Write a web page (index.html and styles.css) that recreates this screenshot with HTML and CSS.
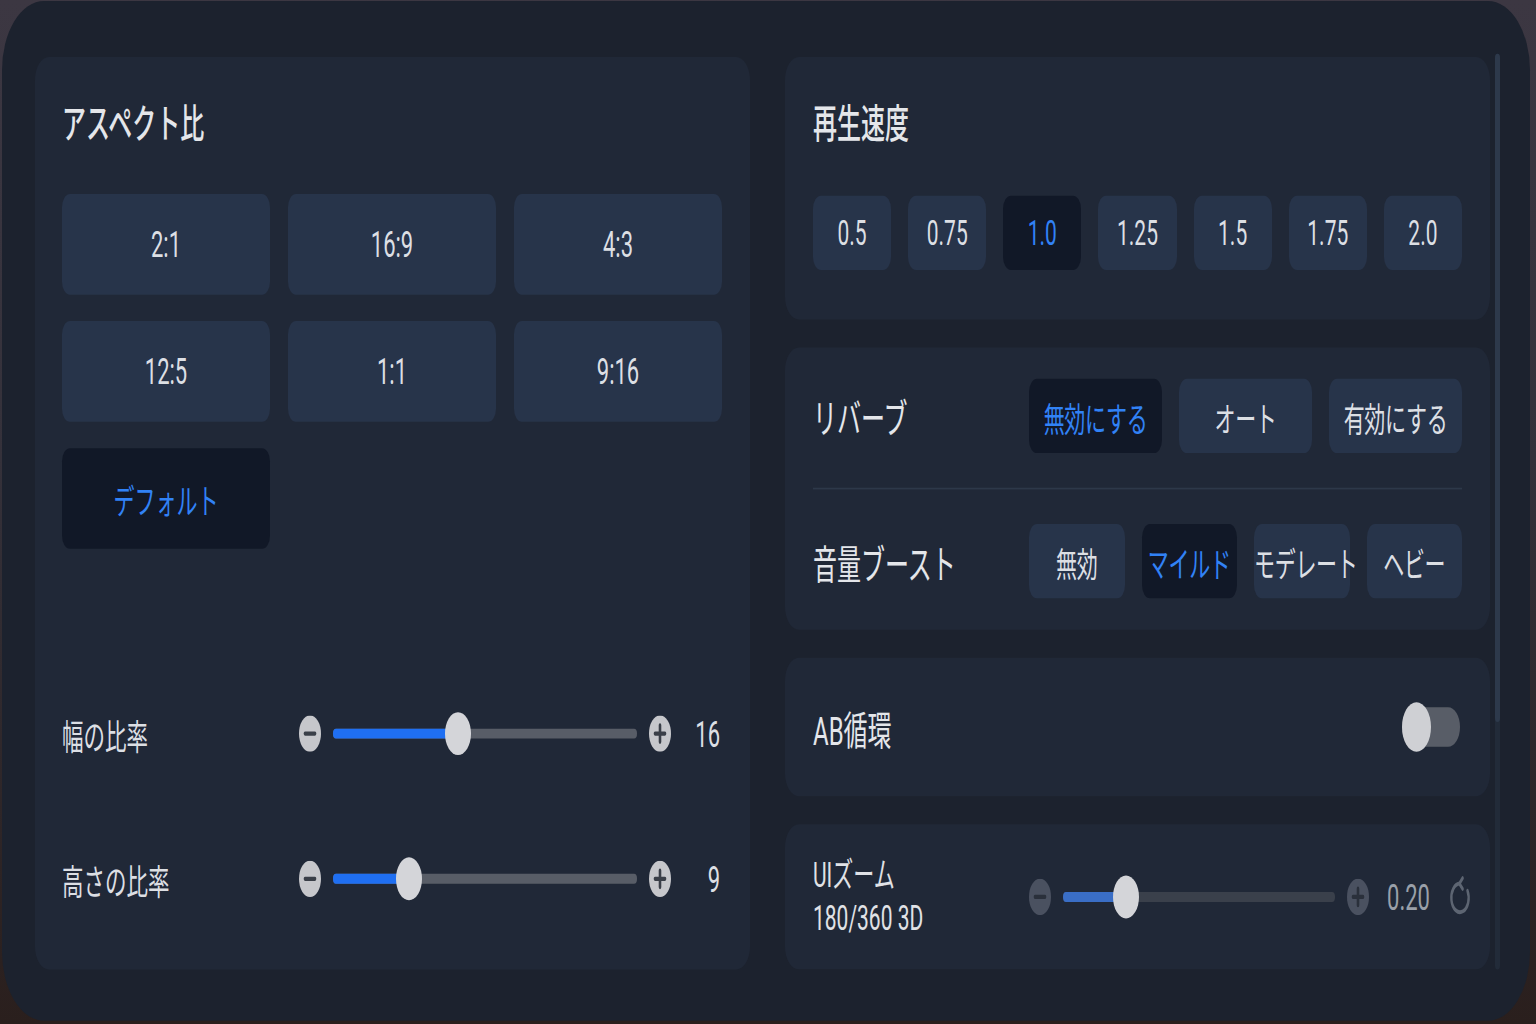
FILE: index.html
```html
<!DOCTYPE html>
<html lang="ja">
<head>
    <meta charset="UTF-8">
    <title>プレーヤー設定</title>
    <link rel="stylesheet" href="styles.css">
</head>
<body>
    <div class="stage">
        <div class="window">
            <!-- 左: アスペクト比 -->
            <section class="card aspect-card">
                <h2 class="card-title">アスペクト比</h2>
                <div class="ratio-grid">
                    <button class="opt">2:1</button>
                    <button class="opt">16:9</button>
                    <button class="opt">4:3</button>
                    <button class="opt">12:5</button>
                    <button class="opt">1:1</button>
                    <button class="opt">9:16</button>
                    <button class="opt active">デフォルト</button>
                </div>
                <div class="ratio-sliders">
                    <div class="slider-row">
                        <span class="slider-label">幅の比率</span>
                        <svg class="step" viewBox="0 0 22 22"><circle cx="11" cy="11" r="11"/><path d="M6 11h10"/></svg>
                        <div class="track"><div class="fill" style="width: 41%"></div><span class="thumb" style="left: 41%"></span></div>
                        <svg class="step" viewBox="0 0 22 22"><circle cx="11" cy="11" r="11"/><path d="M6 11h10M11 6v10"/></svg>
                        <span class="slider-value">16</span>
                    </div>
                    <div class="slider-row">
                        <span class="slider-label">高さの比率</span>
                        <svg class="step" viewBox="0 0 22 22"><circle cx="11" cy="11" r="11"/><path d="M6 11h10"/></svg>
                        <div class="track"><div class="fill" style="width: 25%"></div><span class="thumb" style="left: 25%"></span></div>
                        <svg class="step" viewBox="0 0 22 22"><circle cx="11" cy="11" r="11"/><path d="M6 11h10M11 6v10"/></svg>
                        <span class="slider-value">9</span>
                    </div>
                </div>
            </section>

            <!-- 右: 再生関連 -->
            <div class="side">
                <div class="side-scroll">
                    <section class="card speed-card">
                        <h2 class="card-title">再生速度</h2>
                        <div class="speed-list">
                            <button class="opt small">0.5</button>
                            <button class="opt small">0.75</button>
                            <button class="opt small active">1.0</button>
                            <button class="opt small">1.25</button>
                            <button class="opt small">1.5</button>
                            <button class="opt small">1.75</button>
                            <button class="opt small">2.0</button>
                        </div>
                    </section>

                    <section class="card audio-card">
                        <div class="setting-row">
                            <span class="row-label">リバーブ</span>
                            <div class="choice">
                                <button class="opt small active">無効にする</button>
                                <button class="opt small">オート</button>
                                <button class="opt small">有効にする</button>
                            </div>
                        </div>
                        <hr class="divider">
                        <div class="setting-row">
                            <span class="row-label">音量ブースト</span>
                            <div class="choice">
                                <button class="opt small">無効</button>
                                <button class="opt small active">マイルド</button>
                                <button class="opt small">モデレート</button>
                                <button class="opt small">ヘビー</button>
                            </div>
                        </div>
                    </section>

                    <section class="card ab-card">
                        <span class="row-label">AB循環</span>
                        <span class="toggle"><span class="knob"></span></span>
                    </section>

                    <section class="card zoom-card">
                        <div class="zoom-label">
                            <span>UIズーム</span>
                            <span>180/360 3D</span>
                        </div>
                        <div class="slider-row dim">
                            <svg class="step" viewBox="0 0 22 22"><circle cx="11" cy="11" r="11"/><path d="M6 11h10"/></svg>
                            <div class="track"><div class="fill" style="width: 23%"></div><span class="thumb" style="left: 23%"></span></div>
                            <svg class="step" viewBox="0 0 22 22"><circle cx="11" cy="11" r="11"/><path d="M6 11h10M11 6v10"/></svg>
                            <span class="slider-value">0.20</span>
                            <svg class="reset" viewBox="0 0 24 24"><path d="M11 4.5A8 8 0 1 0 18 8.5"/><path d="M13.5 1.5L10.5 4.5L13.5 7.5"/></svg>
                        </div>
                    </section>
                </div>
                <div class="scrollbar"><div class="scrollbar-thumb"></div></div>
            </div>
        </div>
    </div>
</body>
</html>
```

FILE: styles.css
```css
:root {
    --window-bg: #1c222e;
    --card-bg: #202837;
    --btn-bg: #27344a;
    --btn-active: #111827;
    --accent: #3182f6;
    --text: #dcdfe4;
    --track: #585d67;
}

* {
    box-sizing: border-box;
}

body {
    margin: 0;
    height: 1024px;
    overflow: hidden;
    background: linear-gradient(180deg, #3c3742 0%, #34313a 45%, #2a1f1d 100%);
    font-family: Roboto, "Noto Sans CJK JP", sans-serif;
    color: var(--text);
}

/* 縦に引き伸ばした表示 */
.stage {
    width: 1536px;
    height: 620px;
    transform: scaleY(1.65);
    transform-origin: 0 0;
}

.window {
    margin: 1px 6px 0 2px;
    height: 618px;
    padding: 34px 30px 31px 33px;
    border-radius: 42px;
    background: var(--window-bg);
    display: flex;
    gap: 35px;
}

.card {
    background: var(--card-bg);
    border-radius: 14px;
}

.card-title {
    margin: 0;
    font-size: 24px;
    line-height: 30px;
    font-weight: 500;
    color: #e4e6ea;
}

button.opt {
    border: none;
    border-radius: 8px;
    background: var(--btn-bg);
    color: var(--text);
    font-family: inherit;
    font-size: 22px;
    padding: 0;
    cursor: pointer;
}

button.opt.small {
    font-size: 21px;
}

button.opt.active {
    background: var(--btn-active);
    color: var(--accent);
}

/* アスペクト比 */
.aspect-card {
    width: 715px;
    padding: 26px 30px 35px 27px;
    display: flex;
    flex-direction: column;
}

.ratio-grid {
    margin-top: 27px;
    display: grid;
    grid-template-columns: repeat(3, 208px);
    grid-auto-rows: 61px;
    column-gap: 18px;
    row-gap: 16px;
}

.ratio-grid .active {
    font-size: 21px;
}

.ratio-sliders {
    margin-top: auto;
    display: flex;
    flex-direction: column;
    gap: 48px;
}

.slider-row {
    height: 40px;
    display: flex;
    align-items: center;
    gap: 12px;
}

.slider-label {
    width: 225px;
    font-size: 21.5px;
}

.step {
    width: 22px;
    height: 22px;
    flex: none;
}

.step circle {
    fill: #c6c7cb;
}

.step path {
    stroke: #3a3f48;
    stroke-width: 2.6;
    stroke-linecap: round;
}

.track {
    flex: 1;
    height: 6px;
    border-radius: 3px;
    background: var(--track);
    position: relative;
}

.fill {
    height: 100%;
    border-radius: 3px;
    background: #1f6ff2;
}

.thumb {
    position: absolute;
    top: 50%;
    width: 26px;
    height: 26px;
    margin: -13px 0 0 -13px;
    border-radius: 50%;
    background: #d4d5d9;
}

.slider-value {
    width: 37px;
    text-align: right;
    font-size: 22px;
}

/* 右カラム */
.side {
    width: 715px;
    display: flex;
    gap: 5px;
}

.side-scroll {
    flex: 1;
    display: flex;
    flex-direction: column;
    gap: 17px;
    overflow: hidden;
}

.scrollbar {
    width: 5px;
    margin-top: -2px;
    border-radius: 3px;
    background: #222b39;
}

.scrollbar-thumb {
    height: 73%;
    border-radius: 3px;
    background: #2d394b;
}

.speed-card {
    padding: 26px 28px 30px 28px;
}

.speed-list {
    margin-top: 28px;
    display: grid;
    grid-template-columns: repeat(7, 1fr);
    gap: 17px;
}

.speed-list .opt {
    height: 45px;
    font-size: 22px;
}

.audio-card {
    padding: 19px 28px;
}

.setting-row {
    display: flex;
    align-items: center;
}

.row-label {
    width: 216px;
    font-size: 24px;
    color: #e4e6ea;
}

.choice {
    flex: 1;
    display: flex;
    gap: 17px;
}

.choice .opt {
    flex: 1 1 0;
    min-width: 0;
    height: 45px;
    white-space: nowrap;
    overflow: visible;
    letter-spacing: -0.3px;
}

.divider {
    margin: 21px 0;
    border: none;
    height: 1px;
    background: #2d3849;
}

.ab-card {
    height: 84px;
    flex: none;
    padding: 0 30px 0 28px;
    display: flex;
    align-items: center;
    justify-content: space-between;
}

.toggle {
    width: 58px;
    height: 24px;
    border-radius: 12px;
    background: var(--track);
    position: relative;
}

.knob {
    position: absolute;
    left: 0;
    top: -3px;
    width: 29px;
    height: 30px;
    border-radius: 50%;
    background: #cfd0d4;
}

.zoom-card {
    flex: 1;
    padding: 0 16px 0 28px;
    display: flex;
    align-items: center;
}

.zoom-label {
    width: 216px;
    display: flex;
    flex-direction: column;
    font-size: 21px;
    line-height: 26px;
    color: #e0e2e6;
}

.slider-row.dim {
    flex: 1;
}

.dim .step circle {
    fill: #4a5160;
}

.dim .step path {
    stroke: #2a303b;
}

.dim .track {
    background: #3a404b;
}

.dim .fill {
    background: #3a6ec6;
}

.dim .slider-value {
    width: auto;
    margin-left: 6px;
    color: #9aa0a9;
}

.reset {
    width: 26px;
    height: 26px;
    margin-left: 6px;
    fill: none;
    stroke: #5d6572;
    stroke-width: 2.2;
    stroke-linecap: round;
    stroke-linejoin: round;
}
```
